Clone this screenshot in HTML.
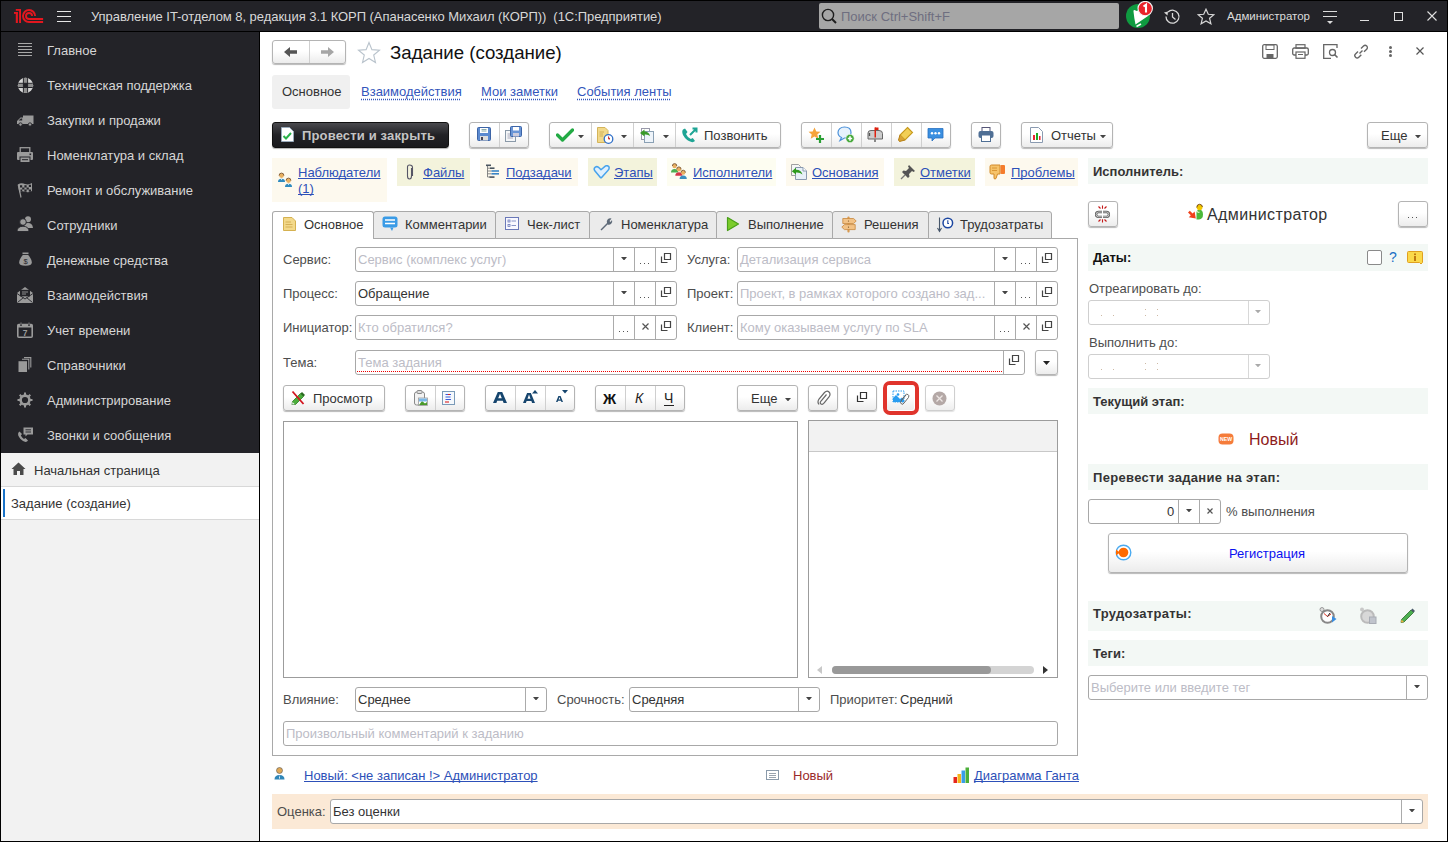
<!DOCTYPE html>
<html><head><meta charset="utf-8"><style>
html,body{margin:0;padding:0}
body{width:1448px;height:842px;position:relative;overflow:hidden;background:#000;font-family:"Liberation Sans", sans-serif}
.a{position:absolute}
.t{position:absolute;white-space:nowrap;font-family:"Liberation Sans", sans-serif}
.btn{position:absolute;border:1px solid #b4b4b4;border-radius:3px;background:linear-gradient(#ffffff 0%,#ffffff 45%,#ececec 100%);box-shadow:0 1px 1px rgba(0,0,0,0.28)}
.fld{position:absolute;border:1px solid #a8a8a8;border-radius:3px;background:#fff}
.lnk{text-decoration:underline;text-underline-offset:1px;text-decoration-skip-ink:none}
.dl{text-decoration:underline dotted;text-underline-offset:3px;text-decoration-skip-ink:none}
</style></head><body>
<div class="a" style="left:1px;top:1px;width:1446px;height:30px;background:#232328"></div>
<div class="a" style="left:1px;top:32px;width:258px;height:421px;background:#232328"></div>
<div class="a" style="left:1px;top:453px;width:258px;height:388px;background:#f2f2f2"></div>
<div class="a" style="left:260px;top:32px;width:1187px;height:809px;background:#fff"></div>
<svg class="a" style="left:0px;top:0px" width="50" height="30" viewBox="0 0 50 30"><g fill="#e3171f"><rect x="15.8" y="9" width="5.2" height="1.8"/><rect x="19.1" y="9" width="1.9" height="14"/><rect x="15.8" y="12" width="2.1" height="11"/><rect x="14" y="12" width="3.9" height="1.9"/></g><g fill="none" stroke="#e3171f" stroke-width="1.9"><path d="M35.1 16A6.05 6.05 0 1 0 29 22.05H43.1"/><path d="M32.1 16A3.05 3.05 0 1 0 29 19.05H43.1"/></g></svg>
<div class="a" style="left:57px;top:11px;width:14px;height:1px;background:#e6e6e6;height:1.2px"></div>
<div class="a" style="left:57px;top:16px;width:14px;height:1px;background:#e6e6e6;height:1.2px"></div>
<div class="a" style="left:57px;top:21px;width:14px;height:1px;background:#e6e6e6;height:1.2px"></div>
<div class="t " style="left:91px;top:9px;font-size:13px;line-height:15px;color:#d8d8d8;letter-spacing:-0.05px">Управление IT-отделом 8, редакция 3.1 КОРП (Апанасенко Михаил (КОРП))&nbsp; (1С:Предприятие)</div>
<div class="a" style="left:819px;top:3px;width:300px;height:26px;background:#a6a6a6;border-radius:2px"></div>
<svg class="a" style="left:821px;top:8px" width="17" height="16" viewBox="0 0 17 16"><circle cx="7" cy="7" r="5.6" fill="none" stroke="#1e1e1e" stroke-width="1.4"/><path d="M11 11L15 15" stroke="#1e1e1e" stroke-width="2"/></svg>
<div class="t " style="left:841px;top:9px;font-size:13px;line-height:15px;color:#6e6e80;">Поиск Ctrl+Shift+F</div>
<svg class="a" style="left:1124px;top:1px" width="32" height="29" viewBox="0 0 32 29"><circle cx="14" cy="15" r="12" fill="#0f9a40"/><path d="M9.5 10.5Q9 9 10.5 9Q11.5 9 12 10L20 8L24 15L11.5 23.5Q10 16 9.5 10.5Z" fill="#fff"/><path d="M12.5 25.5L17 23" stroke="#fff" stroke-width="1.6"/><circle cx="21.2" cy="7.6" r="7.2" fill="#e8232b" stroke="#f4f4f4" stroke-width="1.1"/><path d="M19.5 5.5L22 3.8V11.5" fill="none" stroke="#fff" stroke-width="2.1"/></svg>
<svg class="a" style="left:1163px;top:8px" width="18" height="17" viewBox="0 0 18 17"><path d="M3 8.5A6.5 6.5 0 1 0 5 4" fill="none" stroke="#d8d8d8" stroke-width="1.3"/><path d="M1 4.5L5 3.5L4.5 7.5Z" fill="#d8d8d8"/><path d="M9.5 5V9L12.5 11.5" fill="none" stroke="#d8d8d8" stroke-width="1.3"/></svg>
<svg class="a" style="left:1197px;top:8px" width="18" height="17" viewBox="0 0 18 17"><path d="M9 1.2L11.3 6.3L16.8 6.7L12.6 10.3L13.9 15.8L9 12.9L4.1 15.8L5.4 10.3L1.2 6.7L6.7 6.3Z" fill="none" stroke="#d8d8d8" stroke-width="1.2"/></svg>
<div class="t " style="left:1227px;top:10px;font-size:11.5px;line-height:12px;color:#dcdcdc;">Администратор</div>
<svg class="a" style="left:1322px;top:10px" width="16" height="15" viewBox="0 0 16 15"><path d="M1 1.5H15M1 6.5H15" stroke="#dcdcdc" stroke-width="1.1"/><path d="M5 11H11L8 14Z" fill="#dcdcdc"/></svg>
<div class="a" style="left:1360px;top:20px;width:9px;height:1.2px;background:#e0e0e0"></div>
<div class="a" style="left:1394px;top:12px;width:6.6px;height:6.6px;border:1.2px solid #e0e0e0"></div>
<svg class="a" style="left:1427px;top:11px" width="10" height="10" viewBox="0 0 10 10"><path d="M0.5 0.5L9.5 9.5M9.5 0.5L0.5 9.5" stroke="#e0e0e0" stroke-width="1.1"/></svg>
<div class="t " style="left:47px;top:43px;font-size:13px;line-height:15px;color:#d6d6d6;">Главное</div>
<div class="a" style="left:18px;top:43px;width:14px;height:1px;background:#a8a8a8"></div>
<div class="a" style="left:18px;top:46px;width:14px;height:1px;background:#a8a8a8"></div>
<div class="a" style="left:18px;top:49px;width:14px;height:1px;background:#a8a8a8"></div>
<div class="a" style="left:18px;top:52px;width:14px;height:1px;background:#a8a8a8"></div>
<div class="a" style="left:18px;top:55px;width:14px;height:1px;background:#a8a8a8"></div>
<div class="t " style="left:47px;top:78px;font-size:13px;line-height:15px;color:#d6d6d6;">Техническая поддержка</div>
<svg class="a" style="left:17px;top:77px" width="17" height="17" viewBox="0 0 17 17"><defs><clipPath id="lb"><circle cx="8.5" cy="8.4" r="7.7"/></clipPath></defs><g clip-path="url(#lb)"><rect width="17" height="17" fill="#d6d6d6"/><path d="M6.9 0H10.1V17H6.9ZM0 6.8H17V10H0Z" fill="#8e8e8e"/><path d="M6.4 0V17M10.6 0V17M0 6.3H17M0 10.5H17" stroke="#232328" stroke-width="1"/><rect x="6.4" y="6.3" width="4.2" height="4.2" fill="#232328"/></g></svg>
<div class="t " style="left:47px;top:113px;font-size:13px;line-height:15px;color:#d6d6d6;">Закупки и продажи</div>
<svg class="a" style="left:17px;top:115px" width="17" height="12" viewBox="0 0 17 12"><path d="M0 9V6L3.5 2.5H6V0.5H16.5V9Z" fill="#9a9a9a"/><path d="M1.5 5.5L3.8 3.5H5.2V5.5Z" fill="#232328"/><circle cx="3.5" cy="9.5" r="1.7" fill="#9a9a9a" stroke="#232328" stroke-width="0.9"/><circle cx="13" cy="9.5" r="1.7" fill="#9a9a9a" stroke="#232328" stroke-width="0.9"/></svg>
<div class="t " style="left:47px;top:148px;font-size:13px;line-height:15px;color:#d6d6d6;">Номенклатура и склад</div>
<svg class="a" style="left:17px;top:147px" width="16" height="16" viewBox="0 0 16 16"><rect x="3.2" y="0.7" width="9.6" height="5" fill="none" stroke="#9a9a9a" stroke-width="1.3"/><rect x="0" y="5" width="16" height="8" rx="1" fill="#9a9a9a"/><rect x="12.5" y="6.5" width="1.6" height="1.6" fill="#232328"/><rect x="3" y="10" width="10" height="5.5" fill="#9a9a9a" stroke="#232328" stroke-width="1"/><path d="M5 12.7H11" stroke="#232328" stroke-width="1"/></svg>
<div class="t " style="left:47px;top:183px;font-size:13px;line-height:15px;color:#d6d6d6;">Ремонт и обслуживание</div>
<svg class="a" style="left:17px;top:182px" width="16" height="16" viewBox="0 0 16 16"><path d="M1.2 2.5L4 15.5" stroke="#9a9a9a" stroke-width="1.2"/><path d="M1 2.5Q4 0.5 8 2Q11.5 3.2 15 1V9Q11.5 11 8 9.8Q4.5 8.5 2.3 10.5Z" fill="#9a9a9a"/><path d="M3 3.2h2.2v2.2h-2.2zM7.4 3.2h2.2v2.2h-2.2zM11.8 2.8h2.2v2.2h-2.2zM5.2 5.4h2.2v2.2h-2.2zM9.6 5.4h2.2v2.2h-2.2zM3.5 7.6h1.7v2.0h-1.7zM7.4 7.6h2.2v2.2h-2.2zM11.8 7.6h2.2v2.2h-2.2z" fill="#232328"/></svg>
<div class="t " style="left:47px;top:218px;font-size:13px;line-height:15px;color:#d6d6d6;">Сотрудники</div>
<svg class="a" style="left:17px;top:216px" width="17" height="16" viewBox="0 0 17 16"><circle cx="11" cy="3.2" r="3" fill="#9a9a9a"/><path d="M7 12Q7 7 11 7Q15.5 7 16 12Z" fill="#9a9a9a"/><circle cx="6" cy="6" r="3.3" fill="#9a9a9a" stroke="#232328" stroke-width="0.9"/><path d="M0 15.5Q0 10.5 6 10.2Q12 10.5 12 15.5Z" fill="#9a9a9a" stroke="#232328" stroke-width="0.9"/></svg>
<div class="t " style="left:47px;top:253px;font-size:13px;line-height:15px;color:#d6d6d6;">Денежные средства</div>
<svg class="a" style="left:19px;top:252px" width="13" height="15" viewBox="0 0 13 15"><rect x="3.5" y="0.5" width="6" height="1.6" fill="#9a9a9a"/><path d="M3.8 3H9.2Q12.8 7 12.8 10.5Q12.8 13.8 6.5 13.8Q0.2 13.8 0.2 10.5Q0.2 7 3.8 3Z" fill="#9a9a9a"/><text x="6.5" y="11.8" font-size="7.5" fill="#232328" text-anchor="middle" font-family="Liberation Sans">$</text></svg>
<div class="t " style="left:47px;top:288px;font-size:13px;line-height:15px;color:#d6d6d6;">Взаимодействия</div>
<svg class="a" style="left:17px;top:287px" width="16" height="16" viewBox="0 0 16 16"><path d="M0 6L8 0L16 6V16H0Z" fill="#9a9a9a"/><rect x="3" y="2.8" width="10" height="6.5" fill="#232328"/><path d="M5 5H11M5 7H9" stroke="#9a9a9a" stroke-width="0.9"/><path d="M0.5 15.5L6.5 10.5M15.5 15.5L9.5 10.5M0 6.5L8 12L16 6.5" fill="none" stroke="#232328" stroke-width="0.9"/></svg>
<div class="t " style="left:47px;top:323px;font-size:13px;line-height:15px;color:#d6d6d6;">Учет времени</div>
<svg class="a" style="left:17px;top:322px" width="16" height="16" viewBox="0 0 16 16"><rect x="0.8" y="2.5" width="14.4" height="12.7" rx="1" fill="none" stroke="#9a9a9a" stroke-width="1.6"/><rect x="0.8" y="2.5" width="14.4" height="3" fill="#9a9a9a"/><path d="M4 0V4M12 0V4" stroke="#232328" stroke-width="1.8"/><path d="M4 0.5V3.5M12 0.5V3.5" stroke="#9a9a9a" stroke-width="0.9"/><text x="8" y="14" font-size="8.5" font-weight="bold" fill="#9a9a9a" text-anchor="middle" font-family="Liberation Sans">7</text></svg>
<div class="t " style="left:47px;top:358px;font-size:13px;line-height:15px;color:#d6d6d6;">Справочники</div>
<svg class="a" style="left:18px;top:357px" width="14" height="16" viewBox="0 0 14 16"><path d="M6 0.6H12.8V10.5" fill="none" stroke="#9a9a9a" stroke-width="1.1"/><path d="M4 2.3H10.8V12.5" fill="none" stroke="#9a9a9a" stroke-width="1.1"/><rect x="0.5" y="4.2" width="8.5" height="10.8" fill="#9a9a9a"/></svg>
<div class="t " style="left:47px;top:393px;font-size:13px;line-height:15px;color:#d6d6d6;">Администрирование</div>
<svg class="a" style="left:17px;top:392px" width="16" height="16" viewBox="0 0 16 16"><circle cx="8" cy="8" r="4.4" fill="none" stroke="#9a9a9a" stroke-width="2.6"/><path d="M8 0.5V3.5M8 12.5V15.5M0.5 8H3.5M12.5 8H15.5M2.7 2.7L4.8 4.8M11.2 11.2L13.3 13.3M13.3 2.7L11.2 4.8M4.8 11.2L2.7 13.3" stroke="#9a9a9a" stroke-width="2"/></svg>
<div class="t " style="left:47px;top:428px;font-size:13px;line-height:15px;color:#d6d6d6;">Звонки и сообщения</div>
<svg class="a" style="left:17px;top:427px" width="17" height="16" viewBox="0 0 17 16"><path d="M1.5 5.5Q0 8 3.5 12Q7.5 16 10 14.5L11 13.5L8.5 11L7 12Q5 10.5 3.8 8.5L5 7L2.5 4.5Z" fill="#9a9a9a"/><path d="M6.5 0.5H16V7.5H10.5L8.5 9.5V7.5H6.5Z" fill="#9a9a9a"/><path d="M8.5 2.8H14M8.5 5H14" stroke="#232328" stroke-width="0.9"/></svg>
<svg class="a" style="left:11px;top:462px" width="15" height="13" viewBox="0 0 15 13"><path d="M7.5 0.5L0.5 7H2.5V13H6V9H9V13H12.5V7H14.5Z" fill="#4a4a4a"/></svg>
<div class="t " style="left:34px;top:463px;font-size:13px;line-height:15px;color:#333;">Начальная страница</div>
<div class="a" style="left:1px;top:486px;width:258px;height:1px;background:#d8d8d8"></div>
<div class="a" style="left:1px;top:487px;width:258px;height:32px;background:#fff"></div>
<div class="a" style="left:3px;top:489px;width:2px;height:28px;background:#1a73c8"></div>
<div class="t " style="left:11px;top:496px;font-size:13px;line-height:15px;color:#333;">Задание (создание)</div>
<div class="a" style="left:1px;top:519px;width:258px;height:1px;background:#d8d8d8"></div>
<div class="btn" style="left:272px;top:40px;width:72px;height:22px;"></div>
<div class="a" style="left:309px;top:41px;width:1px;height:22px;background:#d0d0d0"></div>
<svg class="a" style="left:283px;top:46px" width="16" height="12" viewBox="0 0 16 12"><path d="M1 6L7 1V4.2H14V7.8H7V11Z" fill="#555"/></svg>
<svg class="a" style="left:319px;top:46px" width="16" height="12" viewBox="0 0 16 12"><path d="M15 6L9 1V4.2H2V7.8H9V11Z" fill="#a6a6a6"/></svg>
<svg class="a" style="left:357px;top:41px" width="24" height="23" viewBox="0 0 24 23"><path d="M12 1.5L14.9 8.6L22.5 9.1L16.7 14L18.5 21.5L12 17.5L5.5 21.5L7.3 14L1.5 9.1L9.1 8.6Z" fill="none" stroke="#b9c3cc" stroke-width="1.1"/></svg>
<div class="t " style="left:390px;top:42px;font-size:18.67px;line-height:21px;color:#111;">Задание (создание)</div>
<svg class="a" style="left:1262px;top:44px" width="16" height="15" viewBox="0 0 16 15"><rect x="0.7" y="0.7" width="14.6" height="13.6" rx="1.5" fill="none" stroke="#666" stroke-width="1.3"/><rect x="4" y="1" width="8" height="4.5" fill="none" stroke="#666" stroke-width="1"/><rect x="4.5" y="10" width="7" height="4" fill="#666"/></svg>
<svg class="a" style="left:1292px;top:44px" width="17" height="15" viewBox="0 0 17 15"><rect x="4" y="0.7" width="9" height="3.5" fill="none" stroke="#666" stroke-width="1.2"/><rect x="0.7" y="4" width="15.6" height="7" rx="1.5" fill="none" stroke="#666" stroke-width="1.3"/><rect x="4" y="8" width="9" height="6.3" fill="#fff" stroke="#666" stroke-width="1.2"/><path d="M6 10.5H11" stroke="#666"/></svg>
<svg class="a" style="left:1323px;top:44px" width="16" height="15" viewBox="0 0 16 15"><path d="M14 4V0.7H0.7V14.3H8" fill="none" stroke="#666" stroke-width="1.3"/><circle cx="9.5" cy="8.5" r="3" fill="none" stroke="#666" stroke-width="1.3"/><path d="M11.5 10.5L14.5 13.5" stroke="#666" stroke-width="1.6"/></svg>
<svg class="a" style="left:1353px;top:44px" width="16" height="15" viewBox="0 0 16 15"><path d="M6.5 9.5L9.5 6.5M5 7.5L2.5 10A2.2 2.2 0 0 0 5.8 13.2L8.3 10.7M8 4.5L10.5 2A2.2 2.2 0 0 1 13.7 5.2L11 7.8" fill="none" stroke="#666" stroke-width="1.4"/></svg>
<div class="a" style="left:1389px;top:46px;width:3px;height:3px;background:#666;border-radius:50%"></div>
<div class="a" style="left:1389px;top:50px;width:3px;height:3px;background:#666;border-radius:50%"></div>
<div class="a" style="left:1389px;top:54px;width:3px;height:3px;background:#666;border-radius:50%"></div>
<svg class="a" style="left:1416.0px;top:47.0px" width="8" height="8" viewBox="0 0 8 8"><path d="M0.5 0.5L7.5 7.5M7.5 0.5L0.5 7.5" stroke="#555" stroke-width="1.2"/></svg>
<div class="a" style="left:272px;top:75px;width:78px;height:34px;background:#f0f0f0;border-radius:3px"></div>
<div class="t " style="left:282px;top:84px;font-size:13px;line-height:15px;color:#333;">Основное</div>
<div class="t dl" style="left:361px;top:84px;font-size:13px;line-height:15px;color:#3355bb;">Взаимодействия</div>
<div class="t dl" style="left:481px;top:84px;font-size:13px;line-height:15px;color:#3355bb;">Мои заметки</div>
<div class="t dl" style="left:577px;top:84px;font-size:13px;line-height:15px;color:#3355bb;">События ленты</div>
<div class="a" style="left:272px;top:122px;width:175px;height:24px;border:1px solid #111;border-radius:3px;background:linear-gradient(#4a4a4e,#222226 50%,#1a1a1d);box-shadow:0 1px 1px rgba(0,0,0,0.3)"></div>
<svg class="a" style="left:281px;top:127px" width="13" height="15" viewBox="0 0 13 15"><path d="M0.5 0.5H8.5L12.5 4.5V14.5H0.5Z" fill="#fff" stroke="#9ab" stroke-width="1"/><path d="M2.5 9L5 11.5L10 6" fill="none" stroke="#2ab24a" stroke-width="2"/></svg>
<div class="t " style="left:302px;top:128px;font-size:13px;line-height:15px;color:#c4c4c4;font-weight:bold;letter-spacing:0.15px">Провести и закрыть</div>
<div class="btn" style="left:469px;top:122px;width:58px;height:24px;"></div>
<div class="a" style="left:499px;top:123px;width:1px;height:24px;background:#cfcfcf"></div>
<svg class="a" style="left:477px;top:127px" width="14" height="14" viewBox="0 0 14 14"><rect x="0.5" y="0.5" width="13" height="13" rx="1" fill="#5b8ad0" stroke="#3c64a6"/><rect x="3" y="1" width="8" height="5" fill="#fff"/><path d="M4.5 2.5H9.5M4.5 4H9.5" stroke="#8aa"/><rect x="3" y="9" width="8" height="4.5" fill="#ddd"/><rect x="4" y="10" width="2" height="3" fill="#445"/></svg>
<svg class="a" style="left:505px;top:126px" width="17" height="16" viewBox="0 0 17 16"><rect x="0.5" y="4.5" width="10" height="11" fill="#f4f6f8" stroke="#8a99a8"/><path d="M2.5 8H8M2.5 10H8M2.5 12H8" stroke="#aab"/><rect x="5.5" y="0.5" width="11" height="10" rx="1" fill="#6a95d6" stroke="#3c64a6"/><rect x="8" y="1" width="6" height="3.5" fill="#fff"/><rect x="8" y="7" width="6" height="3.5" fill="#ccd"/></svg>
<div class="btn" style="left:549px;top:122px;width:230px;height:24px;"></div>
<div class="a" style="left:591px;top:123px;width:1px;height:24px;background:#cfcfcf"></div>
<div class="a" style="left:633px;top:123px;width:1px;height:24px;background:#cfcfcf"></div>
<div class="a" style="left:675px;top:123px;width:1px;height:24px;background:#cfcfcf"></div>
<svg class="a" style="left:556px;top:128px" width="18" height="14" viewBox="0 0 18 14"><path d="M1.5 7L6.5 12L16.5 2" fill="none" stroke="#22aa44" stroke-width="3.3" stroke-linejoin="round" stroke-linecap="round"/></svg>
<svg class="a" style="left:578.0px;top:134.6px" width="6" height="3.4" viewBox="0 0 6 3.4"><path d="M0 0H6L3.0 3.4Z" fill="#444"/></svg>
<svg class="a" style="left:597px;top:127px" width="17" height="17" viewBox="0 0 17 17"><path d="M0.5 0.5H8L11 3.5V15.5H0.5Z" fill="#f2d98a" stroke="#d4b45a"/><path d="M2.5 5H7M2.5 7H6M2.5 9H6" stroke="#c9a64a" stroke-width="0.8"/><circle cx="11.5" cy="12" r="4.3" fill="#fff" stroke="#2f6fc8" stroke-width="1.3"/><path d="M11.5 9.5V12H13" stroke="#d33" stroke-width="1"/></svg>
<svg class="a" style="left:620.5px;top:134.6px" width="6" height="3.4" viewBox="0 0 6 3.4"><path d="M0 0H6L3.0 3.4Z" fill="#444"/></svg>
<svg class="a" style="left:639px;top:127px" width="16" height="16" viewBox="0 0 16 16"><rect x="2.5" y="1.5" width="8" height="11" fill="#fff" stroke="#99a"/><rect x="5.5" y="4.5" width="9" height="11" fill="#eef4fa" stroke="#8aa0b4"/><path d="M1 6L5.5 2.5V4.5Q10 4.5 11 9Q9 7 5.5 7.5V9.5Z" fill="#3a9a2a"/></svg>
<svg class="a" style="left:662.5px;top:134.6px" width="6" height="3.4" viewBox="0 0 6 3.4"><path d="M0 0H6L3.0 3.4Z" fill="#444"/></svg>
<svg class="a" style="left:681px;top:127px" width="17" height="16" viewBox="0 0 17 16"><path d="M2 2.5Q0.5 4 2 8Q5 13.5 10.5 15Q12.5 15.5 14 14L11.8 11L9.8 12Q6.5 10.5 5 7L6.5 5L4 1.5Z" fill="#1fa595"/><path d="M9 8L15 2M11.5 1.5H15.5V5.5" fill="none" stroke="#1fa595" stroke-width="2"/></svg>
<div class="t " style="left:704px;top:128px;font-size:13px;line-height:15px;color:#333;">Позвонить</div>
<div class="btn" style="left:801px;top:122px;width:148px;height:24px;"></div>
<div class="a" style="left:831px;top:123px;width:1px;height:24px;background:#cfcfcf"></div>
<div class="a" style="left:861px;top:123px;width:1px;height:24px;background:#cfcfcf"></div>
<div class="a" style="left:891px;top:123px;width:1px;height:24px;background:#cfcfcf"></div>
<div class="a" style="left:921px;top:123px;width:1px;height:24px;background:#cfcfcf"></div>
<svg class="a" style="left:808px;top:127px" width="17" height="16" viewBox="0 0 17 16"><path d="M6.5 0.5L8.3 4.5L12.5 4.8L9.3 7.6L10.3 11.8L6.5 9.5L2.7 11.8L3.7 7.6L0.5 4.8L4.7 4.5Z" fill="#f5a43a"/><path d="M12 8V16M8 12H16" stroke="#2aa034" stroke-width="2.2"/></svg>
<svg class="a" style="left:837px;top:126px" width="18" height="17" viewBox="0 0 18 17"><path d="M7.5 1C3.5 1 1 3.5 1 6.5Q1 10 4.5 11.5L3 14.5L7.5 12Q14 12 14 6.5Q14 1 7.5 1Z" fill="#e7f2fc" stroke="#4a90d9" stroke-width="1.2"/><circle cx="13" cy="12.5" r="4.2" fill="#46a83a" stroke="#fff" stroke-width="0.6"/><path d="M13 10.3V14.7M10.8 12.5H15.2" stroke="#fff" stroke-width="1.6"/></svg>
<svg class="a" style="left:867px;top:127px" width="17" height="16" viewBox="0 0 17 16"><path d="M1 6Q1 3.5 4 3.5H12Q15.5 3.5 15.5 6.5V12H1Z" fill="#ccc" stroke="#666" stroke-width="1"/><path d="M2.5 6V9" stroke="#555" stroke-width="1.3"/><rect x="7.5" y="0.5" width="1.5" height="10" fill="#d21"/><rect x="8" y="0.5" width="3.5" height="2.5" fill="#d21"/><rect x="7" y="12" width="2" height="3" fill="#888"/></svg>
<svg class="a" style="left:897px;top:126px" width="17" height="17" viewBox="0 0 17 17"><path d="M10.5 1.5L15.5 6.5L8 14L3 9Z" fill="#f2cf56" stroke="#c79a1e" stroke-width="1.1"/><path d="M3 9L1.5 14L2.5 15.5L8 14" fill="#d9a336" stroke="#b67e12" stroke-width="1"/></svg>
<svg class="a" style="left:927px;top:127px" width="17" height="15" viewBox="0 0 17 15"><path d="M1 1.5H16V11H8L5 14V11H1Z" fill="#3a8fe0" stroke="#2770c0" stroke-width="0.8"/><circle cx="5" cy="6.2" r="1.2" fill="#fff"/><circle cx="8.5" cy="6.2" r="1.2" fill="#fff"/><circle cx="12" cy="6.2" r="1.2" fill="#fff"/></svg>
<div class="btn" style="left:971px;top:122px;width:28px;height:24px;"></div>
<svg class="a" style="left:978px;top:127px" width="16" height="15" viewBox="0 0 16 15"><rect x="4" y="0.5" width="8" height="4" fill="#fff" stroke="#557"/><rect x="0.5" y="4" width="15" height="7" rx="2" fill="#4f6f95"/><rect x="3.5" y="8" width="9" height="6.5" fill="#fff" stroke="#4f6f95"/></svg>
<div class="btn" style="left:1021px;top:122px;width:90px;height:24px;"></div>
<svg class="a" style="left:1030px;top:127px" width="13" height="16" viewBox="0 0 13 16"><path d="M0.5 0.5H8.5L12.5 4.5V15.5H0.5Z" fill="#fff" stroke="#8a9ab0"/><rect x="3" y="8" width="2" height="5" fill="#e23"/><rect x="6" y="6" width="2" height="7" fill="#2a2"/><rect x="9" y="9" width="1.5" height="4" fill="#e23"/></svg>
<div class="t " style="left:1051px;top:128px;font-size:13px;line-height:15px;color:#333;">Отчеты</div>
<svg class="a" style="left:1100.0px;top:134.6px" width="6" height="3.4" viewBox="0 0 6 3.4"><path d="M0 0H6L3.0 3.4Z" fill="#444"/></svg>
<div class="btn" style="left:1367px;top:122px;width:59px;height:24px;"></div>
<div class="t " style="left:1381px;top:128px;font-size:13px;line-height:15px;color:#333;">Еще</div>
<svg class="a" style="left:1415.0px;top:134.7px" width="6" height="3.4" viewBox="0 0 6 3.4"><path d="M0 0H6L3.0 3.4Z" fill="#444"/></svg>
<div class="a" style="left:272px;top:158px;width:115px;height:44px;background:#fdf9ee"></div>
<svg class="a" style="left:277px;top:172px" width="16" height="16" viewBox="0 0 16 16"><g><path d="M1 10Q1 6.8 4.5 6.8Q8 6.8 8 10Z" fill="#2e8bc0"/><path d="M3.8 6.9L4.5 8.3L5.2 6.9Z" fill="#fff"/><circle cx="4.5" cy="3.6" r="2.4" fill="#e8b060"/><path d="M2.1 3.6Q2.1 1.1 4.5 1.1Q6.9 1.1 6.9 3.6" fill="none" stroke="#7a5530" stroke-width="0.9"/></g><g transform="translate(7,5)"><path d="M1 10Q1 6.8 4.5 6.8Q8 6.8 8 10Z" fill="#2e8bc0"/><path d="M3.8 6.9L4.5 8.3L5.2 6.9Z" fill="#fff"/><circle cx="4.5" cy="3.6" r="2.4" fill="#e8b060"/><path d="M2.1 3.6Q2.1 1.1 4.5 1.1Q6.9 1.1 6.9 3.6" fill="none" stroke="#7a5530" stroke-width="0.9"/></g></svg>
<div class="t lnk" style="left:298px;top:165px;font-size:13px;line-height:15px;color:#2d50b8;">Наблюдатели</div>
<div class="t lnk" style="left:298px;top:181px;font-size:13px;line-height:15px;color:#2d50b8;">(1)</div>
<div class="a" style="left:397px;top:158px;width:73px;height:28px;background:#f3f3dc"></div>
<svg class="a" style="left:405px;top:164px" width="9" height="16" viewBox="0 0 9 16"><path d="M6.5 4V12Q6.5 15 4.5 15Q2.5 15 2.5 12V3Q2.5 1 4.5 1Q7.5 1 7.5 3.5V12" fill="none" stroke="#556" stroke-width="1.1"/></svg>
<div class="t lnk" style="left:423px;top:165px;font-size:13px;line-height:15px;color:#2d50b8;">Файлы</div>
<div class="a" style="left:480px;top:158px;width:98px;height:28px;background:#fdf9ee"></div>
<svg class="a" style="left:485px;top:163px" width="15" height="16" viewBox="0 0 15 16"><path d="M2.5 3V14M2.5 5.2H5M2.5 8H6.5M2.5 10.8H6.5M2.5 14H5" fill="none" stroke="#7a7a7a" stroke-width="0.9"/><rect x="1" y="1.5" width="5" height="1.6" fill="#4a5560"/><rect x="5" y="4.4" width="4.5" height="1.6" fill="#4a5560"/><rect x="6.5" y="7.2" width="7.5" height="1.6" fill="#3a85c6"/><rect x="6.5" y="10" width="7.5" height="1.6" fill="#3a85c6"/><rect x="4.5" y="13.3" width="5" height="1.6" fill="#4a5560"/></svg>
<div class="t lnk" style="left:506px;top:165px;font-size:13px;line-height:15px;color:#2d50b8;">Подзадачи</div>
<div class="a" style="left:588px;top:158px;width:69px;height:28px;background:#f3f3dc"></div>
<svg class="a" style="left:593px;top:165px" width="17" height="14" viewBox="0 0 17 14"><path d="M1.8 5.8Q0.3 3.6 2.3 2.1Q4.3 0.8 6.3 2.9L8 4.8L12.3 1.1Q14.3 -0.1 15.8 1.6Q16.8 3.6 14.9 5.6L8.6 12.4Q8 13 7.4 12.4Z" fill="#dff0fd" stroke="#47a3ec" stroke-width="1.5" stroke-linejoin="round"/></svg>
<div class="t lnk" style="left:614px;top:165px;font-size:13px;line-height:15px;color:#2d50b8;">Этапы</div>
<div class="a" style="left:667px;top:158px;width:109px;height:28px;background:#fdfdf1"></div>
<svg class="a" style="left:671px;top:163px" width="17" height="18" viewBox="0 0 17 18"><path d="M0 9.5Q0 6 3.6 6Q7.2 6 7.2 9.5Z" fill="#4caf50"/><circle cx="3.6" cy="3" r="2.2" fill="#e8b060"/><path d="M1.4 3Q1.4 0.6 3.6 0.6Q5.8 0.6 5.8 3" fill="none" stroke="#7a5530" stroke-width="0.9"/><path d="M4.3 12.8Q4.3 9.3 7.9 9.3Q11.5 9.3 11.5 12.8Z" fill="#d6334a"/><circle cx="7.9" cy="6.3" r="2.2" fill="#e8b060"/><path d="M5.699999999999999 6.3Q5.699999999999999 3.9 7.9 3.9Q10.1 3.9 10.1 6.3" fill="none" stroke="#7a5530" stroke-width="0.9"/><path d="M8.6 16.1Q8.6 12.6 12.2 12.6Q15.8 12.6 15.8 16.1Z" fill="#3b8fc0"/><circle cx="12.2" cy="9.6" r="2.2" fill="#e8b060"/><path d="M10.0 9.6Q10.0 7.199999999999999 12.2 7.199999999999999Q14.399999999999999 7.199999999999999 14.399999999999999 9.6" fill="none" stroke="#7a5530" stroke-width="0.9"/></svg>
<div class="t lnk" style="left:693px;top:165px;font-size:13px;line-height:15px;color:#2d50b8;">Исполнители</div>
<div class="a" style="left:786px;top:158px;width:98px;height:28px;background:#fdf9ee"></div>
<svg class="a" style="left:791px;top:164px" width="16" height="16" viewBox="0 0 16 16"><path d="M0.5 0.5H7.5L9.5 2.5V11.5H0.5Z" fill="#f6f6f6" stroke="#a0a0a0"/><path d="M4.5 3.5H12L15.5 7V15.5H4.5Z" fill="#e8f0f8" stroke="#8a9ab0"/><path d="M12 3.5V7H15.5" fill="#fff" stroke="#8a9ab0"/><path d="M0.8 7.2L5 3.8V5.8Q10 5.6 11.5 10.5Q9 8.3 5 8.6V10.6Z" fill="#2e9a1e"/></svg>
<div class="t lnk" style="left:812px;top:165px;font-size:13px;line-height:15px;color:#2d50b8;">Основания</div>
<div class="a" style="left:894px;top:158px;width:81px;height:28px;background:#f3f3dc"></div>
<svg class="a" style="left:900px;top:164px" width="16" height="16" viewBox="0 0 16 16"><path d="M9 1L15 7L13.5 8L12 7L9 10L9.5 12.5L8 14L2 8L3.5 6.5L6 7L9 4L8 2.5Z" fill="#555"/><path d="M5 11L1 15" stroke="#777" stroke-width="1.3"/></svg>
<div class="t lnk" style="left:920px;top:165px;font-size:13px;line-height:15px;color:#2d50b8;">Отметки</div>
<div class="a" style="left:985px;top:158px;width:93px;height:28px;background:#fdf9ee"></div>
<svg class="a" style="left:989px;top:164px" width="17" height="16" viewBox="0 0 17 16"><path d="M1 2.5Q1 1 2.5 1H11V10H8.5L7 14.5Q6 15.5 5 14.5L5 10H2.5Q1 10 1 8.5Z" fill="#f6c36a" stroke="#d28a2a" stroke-width="1"/><path d="M3 4H8M3 6.5H8" stroke="#d28a2a" stroke-width="0.8"/><rect x="11.5" y="1" width="4.5" height="9" rx="1" fill="#f57c2c"/></svg>
<div class="t lnk" style="left:1011px;top:165px;font-size:13px;line-height:15px;color:#2d50b8;">Проблемы</div>
<div class="a" style="left:272px;top:238px;width:804px;height:516px;border:1px solid #a9a9a9;border-top:1px solid #a9a9a9;background:#fff"></div>
<div class="a" style="left:272px;top:211px;width:100px;height:27px;border:1px solid #a9a9a9;border-bottom:none;border-radius:3px 3px 0 0;background:#fff"></div>
<div class="a" style="left:273px;top:238px;width:100px;height:1px;background:#fff"></div>
<div class="t " style="left:304px;top:217px;font-size:13px;line-height:15px;color:#333;">Основное</div>
<div class="a" style="left:373px;top:211px;width:121px;height:26px;border:1px solid #a9a9a9;border-radius:3px 3px 0 0;background:#ebebeb"></div>
<div class="t " style="left:405px;top:217px;font-size:13px;line-height:15px;color:#333;">Комментарии</div>
<div class="a" style="left:495px;top:211px;width:93px;height:26px;border:1px solid #a9a9a9;border-radius:3px 3px 0 0;background:#ebebeb"></div>
<div class="t " style="left:527px;top:217px;font-size:13px;line-height:15px;color:#333;">Чек-лист</div>
<div class="a" style="left:589px;top:211px;width:126px;height:26px;border:1px solid #a9a9a9;border-radius:3px 3px 0 0;background:#ebebeb"></div>
<div class="t " style="left:621px;top:217px;font-size:13px;line-height:15px;color:#333;">Номенклатура</div>
<div class="a" style="left:716px;top:211px;width:115px;height:26px;border:1px solid #a9a9a9;border-radius:3px 3px 0 0;background:#ebebeb"></div>
<div class="t " style="left:748px;top:217px;font-size:13px;line-height:15px;color:#333;">Выполнение</div>
<div class="a" style="left:832px;top:211px;width:95px;height:26px;border:1px solid #a9a9a9;border-radius:3px 3px 0 0;background:#ebebeb"></div>
<div class="t " style="left:864px;top:217px;font-size:13px;line-height:15px;color:#333;">Решения</div>
<div class="a" style="left:928px;top:211px;width:122px;height:26px;border:1px solid #a9a9a9;border-radius:3px 3px 0 0;background:#ebebeb"></div>
<div class="t " style="left:960px;top:217px;font-size:13px;line-height:15px;color:#333;">Трудозатраты</div>
<svg class="a" style="left:283px;top:217px" width="13" height="14" viewBox="0 0 13 14"><path d="M0.5 0.5H9L12.5 4V13.5H0.5Z" fill="#f3d98a" stroke="#d5b150"/><path d="M2.5 5H8M2.5 7.5H9.5M2.5 10H9.5" stroke="#cda64a" stroke-width="0.8"/></svg>
<svg class="a" style="left:382px;top:216px" width="16" height="16" viewBox="0 0 16 16"><rect x="0.5" y="0.5" width="15" height="11" rx="2.5" fill="#3a9be6"/><path d="M3 4H13M3 7.5H13" stroke="#fff" stroke-width="1.3"/><path d="M8 11.5L10 15L11.5 11.5Z" fill="#3a9be6"/></svg>
<svg class="a" style="left:505px;top:217px" width="14" height="13" viewBox="0 0 14 13"><rect x="0.5" y="0.5" width="13" height="12" fill="#f8f8ff" stroke="#6a78b8"/><rect x="3" y="3" width="2" height="2" fill="none" stroke="#6a78b8" stroke-width="0.8"/><rect x="3" y="7.5" width="2" height="2" fill="none" stroke="#6a78b8" stroke-width="0.8"/><path d="M6.5 4H11M6.5 8.5H11" stroke="#6a78b8" stroke-width="0.8"/></svg>
<svg class="a" style="left:599px;top:217px" width="14" height="14" viewBox="0 0 14 14"><path d="M1.5 12.5L8 6A3.5 3.5 0 0 1 12.5 1.5L10.5 4L11.5 5L13 3A3.5 3.5 0 0 1 8.5 7.5L2.5 13.5Z" fill="#5e6a78"/></svg>
<svg class="a" style="left:726px;top:216px" width="14" height="16" viewBox="0 0 14 16"><path d="M1.5 1.5L12.5 8L1.5 14.5Z" fill="#7ccc2c" stroke="#4aa01a" stroke-width="1.2" stroke-linejoin="round"/></svg>
<svg class="a" style="left:841px;top:216px" width="16" height="17" viewBox="0 0 16 17"><rect x="6.4" y="0.5" width="2.2" height="16" rx="1" fill="#d89a50"/><path d="M1.8 2.5H12.6L15.2 5L12.6 7.5H1.8Z" fill="#f2c286" stroke="#c8883c" stroke-width="0.8"/><path d="M14.2 8.6H3.4L0.8 11.1L3.4 13.6H14.2Z" fill="#f2c286" stroke="#c8883c" stroke-width="0.8"/><circle cx="7.5" cy="5" r="0.6" fill="#6a4a20"/><circle cx="7.5" cy="11.1" r="0.6" fill="#6a4a20"/></svg>
<svg class="a" style="left:937px;top:217px" width="17" height="16" viewBox="0 0 17 16"><path d="M2.5 0.5V13.5M0.5 11L2.5 14.5L4.5 11" fill="none" stroke="#46566a" stroke-width="1.1"/><circle cx="10.8" cy="6" r="4.8" fill="#fff" stroke="#1c46a0" stroke-width="1.5"/><path d="M10.8 3.3V6.5H12" fill="none" stroke="#1c46a0" stroke-width="1.1"/></svg>
<div class="t " style="left:283px;top:252px;font-size:13px;line-height:15px;color:#4d4d4d;">Сервис:</div>
<div class="fld" style="left:355px;top:247px;width:320px;height:23px;border-color:#a8a8a8;"></div>
<div class="a" style="left:613px;top:248px;width:1px;height:23px;background:#ababab"></div>
<svg class="a" style="left:620.5px;top:256.75px" width="6" height="3.5" viewBox="0 0 6 3.5"><path d="M0 0H6L3.0 3.5Z" fill="#444"/></svg>
<div class="a" style="left:634px;top:248px;width:1px;height:23px;background:#ababab"></div>
<div class="a" style="left:640px;top:263px;width:1.4px;height:1.4px;background:#555"></div>
<div class="a" style="left:644px;top:263px;width:1.4px;height:1.4px;background:#555"></div>
<div class="a" style="left:648px;top:263px;width:1.4px;height:1.4px;background:#555"></div>
<div class="a" style="left:655px;top:248px;width:1px;height:23px;background:#ababab"></div>
<svg class="a" style="left:660px;top:252px" width="12" height="12" viewBox="0 0 12 12"><path d="M4.5 1.5h6v6h-6z M1.5 4.5v6h6" fill="none" stroke="#444" stroke-width="1.2"/></svg>
<div class="t " style="left:358px;top:252px;font-size:13px;line-height:15px;color:#bcbcc6;">Сервис (комплекс услуг)</div>
<div class="t " style="left:283px;top:286px;font-size:13px;line-height:15px;color:#4d4d4d;">Процесс:</div>
<div class="fld" style="left:355px;top:281px;width:320px;height:23px;border-color:#a8a8a8;"></div>
<div class="a" style="left:613px;top:282px;width:1px;height:23px;background:#ababab"></div>
<svg class="a" style="left:620.5px;top:290.75px" width="6" height="3.5" viewBox="0 0 6 3.5"><path d="M0 0H6L3.0 3.5Z" fill="#444"/></svg>
<div class="a" style="left:634px;top:282px;width:1px;height:23px;background:#ababab"></div>
<div class="a" style="left:640px;top:297px;width:1.4px;height:1.4px;background:#555"></div>
<div class="a" style="left:644px;top:297px;width:1.4px;height:1.4px;background:#555"></div>
<div class="a" style="left:648px;top:297px;width:1.4px;height:1.4px;background:#555"></div>
<div class="a" style="left:655px;top:282px;width:1px;height:23px;background:#ababab"></div>
<svg class="a" style="left:660px;top:286px" width="12" height="12" viewBox="0 0 12 12"><path d="M4.5 1.5h6v6h-6z M1.5 4.5v6h6" fill="none" stroke="#444" stroke-width="1.2"/></svg>
<div class="t " style="left:358px;top:286px;font-size:13px;line-height:15px;color:#333;">Обращение</div>
<div class="t " style="left:283px;top:320px;font-size:13px;line-height:15px;color:#4d4d4d;">Инициатор:</div>
<div class="fld" style="left:355px;top:315px;width:320px;height:23px;border-color:#a8a8a8;"></div>
<div class="a" style="left:613px;top:316px;width:1px;height:23px;background:#ababab"></div>
<div class="a" style="left:619px;top:331px;width:1.4px;height:1.4px;background:#555"></div>
<div class="a" style="left:623px;top:331px;width:1.4px;height:1.4px;background:#555"></div>
<div class="a" style="left:627px;top:331px;width:1.4px;height:1.4px;background:#555"></div>
<div class="a" style="left:634px;top:316px;width:1px;height:23px;background:#ababab"></div>
<svg class="a" style="left:641.5px;top:322.5px" width="7" height="7" viewBox="0 0 7 7"><path d="M0.5 0.5L6.5 6.5M6.5 0.5L0.5 6.5" stroke="#555" stroke-width="1.2"/></svg>
<div class="a" style="left:655px;top:316px;width:1px;height:23px;background:#ababab"></div>
<svg class="a" style="left:660px;top:320px" width="12" height="12" viewBox="0 0 12 12"><path d="M4.5 1.5h6v6h-6z M1.5 4.5v6h6" fill="none" stroke="#444" stroke-width="1.2"/></svg>
<div class="t " style="left:358px;top:320px;font-size:13px;line-height:15px;color:#bcbcc6;">Кто обратился?</div>
<div class="t " style="left:687px;top:252px;font-size:13px;line-height:15px;color:#4d4d4d;">Услуга:</div>
<div class="fld" style="left:737px;top:247px;width:319px;height:23px;border-color:#a8a8a8;"></div>
<div class="a" style="left:994px;top:248px;width:1px;height:23px;background:#ababab"></div>
<svg class="a" style="left:1001.5px;top:256.75px" width="6" height="3.5" viewBox="0 0 6 3.5"><path d="M0 0H6L3.0 3.5Z" fill="#444"/></svg>
<div class="a" style="left:1015px;top:248px;width:1px;height:23px;background:#ababab"></div>
<div class="a" style="left:1021px;top:263px;width:1.4px;height:1.4px;background:#555"></div>
<div class="a" style="left:1025px;top:263px;width:1.4px;height:1.4px;background:#555"></div>
<div class="a" style="left:1029px;top:263px;width:1.4px;height:1.4px;background:#555"></div>
<div class="a" style="left:1036px;top:248px;width:1px;height:23px;background:#ababab"></div>
<svg class="a" style="left:1041px;top:252px" width="12" height="12" viewBox="0 0 12 12"><path d="M4.5 1.5h6v6h-6z M1.5 4.5v6h6" fill="none" stroke="#444" stroke-width="1.2"/></svg>
<div class="t " style="left:740px;top:252px;font-size:13px;line-height:15px;color:#bcbcc6;">Детализация сервиса</div>
<div class="t " style="left:687px;top:286px;font-size:13px;line-height:15px;color:#4d4d4d;">Проект:</div>
<div class="fld" style="left:737px;top:281px;width:319px;height:23px;border-color:#a8a8a8;"></div>
<div class="a" style="left:994px;top:282px;width:1px;height:23px;background:#ababab"></div>
<svg class="a" style="left:1001.5px;top:290.75px" width="6" height="3.5" viewBox="0 0 6 3.5"><path d="M0 0H6L3.0 3.5Z" fill="#444"/></svg>
<div class="a" style="left:1015px;top:282px;width:1px;height:23px;background:#ababab"></div>
<div class="a" style="left:1021px;top:297px;width:1.4px;height:1.4px;background:#555"></div>
<div class="a" style="left:1025px;top:297px;width:1.4px;height:1.4px;background:#555"></div>
<div class="a" style="left:1029px;top:297px;width:1.4px;height:1.4px;background:#555"></div>
<div class="a" style="left:1036px;top:282px;width:1px;height:23px;background:#ababab"></div>
<svg class="a" style="left:1041px;top:286px" width="12" height="12" viewBox="0 0 12 12"><path d="M4.5 1.5h6v6h-6z M1.5 4.5v6h6" fill="none" stroke="#444" stroke-width="1.2"/></svg>
<div class="t " style="left:740px;top:286px;font-size:13px;line-height:15px;color:#bcbcc6;">Проект, в рамках которого создано зад...</div>
<div class="t " style="left:687px;top:320px;font-size:13px;line-height:15px;color:#4d4d4d;">Клиент:</div>
<div class="fld" style="left:737px;top:315px;width:319px;height:23px;border-color:#a8a8a8;"></div>
<div class="a" style="left:994px;top:316px;width:1px;height:23px;background:#ababab"></div>
<div class="a" style="left:1000px;top:331px;width:1.4px;height:1.4px;background:#555"></div>
<div class="a" style="left:1004px;top:331px;width:1.4px;height:1.4px;background:#555"></div>
<div class="a" style="left:1008px;top:331px;width:1.4px;height:1.4px;background:#555"></div>
<div class="a" style="left:1015px;top:316px;width:1px;height:23px;background:#ababab"></div>
<svg class="a" style="left:1022.5px;top:322.5px" width="7" height="7" viewBox="0 0 7 7"><path d="M0.5 0.5L6.5 6.5M6.5 0.5L0.5 6.5" stroke="#555" stroke-width="1.2"/></svg>
<div class="a" style="left:1036px;top:316px;width:1px;height:23px;background:#ababab"></div>
<svg class="a" style="left:1041px;top:320px" width="12" height="12" viewBox="0 0 12 12"><path d="M4.5 1.5h6v6h-6z M1.5 4.5v6h6" fill="none" stroke="#444" stroke-width="1.2"/></svg>
<div class="t " style="left:740px;top:320px;font-size:13px;line-height:15px;color:#bcbcc6;">Кому оказываем услугу по SLA</div>
<div class="t " style="left:283px;top:355px;font-size:13px;line-height:15px;color:#4d4d4d;">Тема:</div>
<div class="fld" style="left:355px;top:350px;width:668px;height:23px;border-color:#a8a8a8;"></div>
<div class="a" style="left:1003px;top:351px;width:1px;height:23px;background:#ababab"></div>
<svg class="a" style="left:1008px;top:354px" width="12" height="12" viewBox="0 0 12 12"><path d="M4.5 1.5h6v6h-6z M1.5 4.5v6h6" fill="none" stroke="#444" stroke-width="1.2"/></svg>
<div class="a" style="left:357px;top:371px;width:645px;height:0;border-top:1px dotted #e00"></div>
<div class="t " style="left:358px;top:355px;font-size:13px;line-height:15px;color:#bcbcc6;">Тема задания</div>
<div class="btn" style="left:1035px;top:350px;width:21px;height:23px;"></div>
<svg class="a" style="left:1043.3px;top:361.0px" width="7" height="4" viewBox="0 0 7 4"><path d="M0 0H7L3.5 4Z" fill="#222"/></svg>
<div class="btn" style="left:283px;top:385px;width:100px;height:24px;"></div>
<svg class="a" style="left:291px;top:390px" width="14" height="15" viewBox="0 0 14 15"><path d="M1.5 11.5L9.5 3.5L12.5 6.5L4.5 14.5L1 14.8Z" fill="#4cae3c" stroke="#2a7a20" stroke-width="0.8"/><path d="M9.5 3.5L11 2L14 5L12.5 6.5Z" fill="#2a6a20"/><path d="M1.2 14.6L1.5 12L3.8 14.3Z" fill="#f4f4f4"/><path d="M1.5 1.5L12.5 14" stroke="#d2141e" stroke-width="1.8"/></svg>
<div class="t " style="left:313px;top:391px;font-size:13px;line-height:15px;color:#333;">Просмотр</div>
<div class="btn" style="left:405px;top:385px;width:58px;height:24px;"></div>
<div class="a" style="left:435px;top:386px;width:1px;height:24px;background:#cfcfcf"></div>
<svg class="a" style="left:413px;top:390px" width="15" height="16" viewBox="0 0 15 16"><rect x="1.5" y="2" width="10" height="13" rx="2" fill="#f2f2f2" stroke="#8a8a8a"/><rect x="4" y="0.5" width="5" height="3" rx="1" fill="#ddd" stroke="#888"/><rect x="5.5" y="8" width="9" height="7.5" fill="#fff" stroke="#999" stroke-width="0.8"/><path d="M6 15L9 11L12 13.5L14 12V15Z" fill="#4a9a2a"/><rect x="6" y="8.5" width="8" height="3" fill="#7ab8e8"/></svg>
<svg class="a" style="left:442px;top:391px" width="13" height="14" viewBox="0 0 13 14"><rect x="0.5" y="0.5" width="12" height="13" fill="#f4f8fc" stroke="#7a9ab8"/><path d="M3.5 3.5H9M3.5 6H8.5M3.5 8.5H9" stroke="#3a5ad8" stroke-width="1"/><path d="M3 11H7" stroke="#d22" stroke-width="1.1"/><path d="M6 3.5H8" stroke="#d22" stroke-width="1"/></svg>
<div class="btn" style="left:485px;top:385px;width:88px;height:24px;"></div>
<div class="a" style="left:515px;top:386px;width:1px;height:24px;background:#cfcfcf"></div>
<div class="a" style="left:545px;top:386px;width:1px;height:24px;background:#cfcfcf"></div>
<svg class="a" style="left:493px;top:392px" width="14" height="11" viewBox="0 0 14 11"><path d="M4.8 0H9.2L14 11H10.6L9.8 8.8H4.2L3.4 11H0ZM5.2 6.3H8.8L7 1.8Z" fill="#16456e"/></svg>
<svg class="a" style="left:523px;top:393px" width="12" height="10" viewBox="0 0 12 10"><path d="M4.1 0H7.9L12 10H9.1L8.4 8H3.6L2.9 10H0ZM4.5 5.7H7.5L6 1.6Z" fill="#16456e"/></svg>
<svg class="a" style="left:532px;top:390px" width="6" height="3.5" viewBox="0 0 6 3.5"><path d="M0 3.5L3 0L6 3.5Z" fill="#16456e"/></svg>
<svg class="a" style="left:556px;top:396px" width="7" height="6" viewBox="0 0 7 6"><path d="M2.4 0H4.6L7 6H5.4L5 4.8H2L1.6 6H0ZM2.6 3.5H4.4L3.5 1Z" fill="#16456e"/></svg>
<svg class="a" style="left:562px;top:390px" width="6" height="3.5" viewBox="0 0 6 3.5"><path d="M0 0H6L3 3.5Z" fill="#16456e"/></svg>
<div class="btn" style="left:595px;top:385px;width:88px;height:24px;"></div>
<div class="a" style="left:625px;top:386px;width:1px;height:24px;background:#cfcfcf"></div>
<div class="a" style="left:655px;top:386px;width:1px;height:24px;background:#cfcfcf"></div>
<div class="t " style="left:603px;top:391px;font-size:14.5px;line-height:16px;color:#111;font-weight:bold;">Ж</div>
<div class="t " style="left:635px;top:390px;font-size:14px;line-height:16px;color:#222;font-style:italic">К</div>
<div class="t " style="left:664px;top:390px;font-size:14px;line-height:16px;color:#222;">Ч</div>
<div class="a" style="left:664px;top:405px;width:10px;height:1px;background:#222"></div>
<div class="btn" style="left:737px;top:385px;width:59px;height:24px;"></div>
<div class="t " style="left:751px;top:391px;font-size:13px;line-height:15px;color:#333;">Еще</div>
<svg class="a" style="left:785.2px;top:397.9px" width="6" height="3.4" viewBox="0 0 6 3.4"><path d="M0 0H6L3.0 3.4Z" fill="#444"/></svg>
<div class="btn" style="left:808px;top:385px;width:28px;height:24px;"></div>
<svg class="a" style="left:816px;top:390px" width="15" height="16" viewBox="0 0 15 16"><path d="M10.5 4.5L5 11Q3.5 13 5 14Q6.5 15 8 13L13 7Q15 4 13 2Q11 0 8.5 2.5L3 9Q1 12 3 14.5" fill="none" stroke="#666" stroke-width="1.2"/></svg>
<div class="btn" style="left:847px;top:385px;width:28px;height:24px;"></div>
<svg class="a" style="left:856px;top:391px" width="12" height="12" viewBox="0 0 12 12"><path d="M4.5 1.5h6v6h-6z M1.5 4.5v6h6" fill="none" stroke="#333" stroke-width="1.2"/></svg>
<div class="a" style="left:883px;top:381px;width:28px;height:26px;border:4px solid #e0342c;border-radius:7px;background:#fff"></div>
<div class="a" style="left:887px;top:385px;width:27px;height:25px;border-radius:2px;background:linear-gradient(#fff 45%,#ececec)"></div>
<svg class="a" style="left:892px;top:390px" width="18" height="16" viewBox="0 0 18 16"><rect x="1" y="1" width="11" height="11" fill="none" stroke="#2a9df0" stroke-dasharray="1.5 1"/><path d="M1 12V8L4 5L8 9L10 7.5L12 9.5V12Z" fill="#2a9df0"/><circle cx="6" cy="4.5" r="1.3" fill="#2a9df0"/><path d="M14 5L9 11Q8 13 9.5 14Q11 15 12 13L16.5 7.5Q17.5 5.5 16 4.5Q14.5 3.5 13 5.5L9.5 10" fill="none" stroke="#666" stroke-width="1"/></svg>
<div class="btn" style="left:925px;top:385px;width:28px;height:24px;background:linear-gradient(#fff 45%,#eee);border-color:#cfcfcf;box-shadow:0 1px 1px rgba(0,0,0,0.12)"></div>
<svg class="a" style="left:932px;top:391px" width="15" height="15" viewBox="0 0 15 15"><circle cx="7.5" cy="7.5" r="7" fill="#b4a8a6"/><path d="M4.5 4.5L10.5 10.5M10.5 4.5L4.5 10.5" stroke="#ede6e4" stroke-width="1.3"/></svg>
<div class="a" style="left:283px;top:421px;width:513px;height:255px;border:1px solid #9c9c9c;background:#fff"></div>
<div class="a" style="left:808px;top:420px;width:248px;height:256px;border:1px solid #9c9c9c;background:#fff"></div>
<div class="a" style="left:809px;top:421px;width:248px;height:30px;background:#f2f2f2"></div>
<div class="a" style="left:809px;top:451px;width:248px;height:1px;background:#c8c8c8"></div>
<div class="a" style="left:832px;top:666px;width:202px;height:8px;background:#d4d4d4;border-radius:4px"></div>
<div class="a" style="left:832px;top:666px;width:159px;height:8px;background:#999;border-radius:4px"></div>
<svg class="a" style="left:817px;top:666px" width="6" height="8" viewBox="0 0 6 8"><path d="M5 0V8L0 4Z" fill="#c8c8c8"/></svg>
<svg class="a" style="left:1043px;top:666px" width="6" height="8" viewBox="0 0 6 8"><path d="M0 0V8L5 4Z" fill="#333"/></svg>
<div class="t " style="left:283px;top:692px;font-size:13px;line-height:15px;color:#4d4d4d;">Влияние:</div>
<div class="fld" style="left:355px;top:687px;width:190px;height:23px;border-color:#a8a8a8;"></div>
<div class="a" style="left:525px;top:688px;width:1px;height:23px;background:#ababab"></div>
<svg class="a" style="left:532.5px;top:696.75px" width="6" height="3.5" viewBox="0 0 6 3.5"><path d="M0 0H6L3.0 3.5Z" fill="#444"/></svg>
<div class="t " style="left:358px;top:692px;font-size:13px;line-height:15px;color:#333;">Среднее</div>
<div class="t " style="left:557px;top:692px;font-size:13px;line-height:15px;color:#4d4d4d;">Срочность:</div>
<div class="fld" style="left:629px;top:687px;width:189px;height:23px;border-color:#a8a8a8;"></div>
<div class="a" style="left:798px;top:688px;width:1px;height:23px;background:#ababab"></div>
<svg class="a" style="left:805.5px;top:696.75px" width="6" height="3.5" viewBox="0 0 6 3.5"><path d="M0 0H6L3.0 3.5Z" fill="#444"/></svg>
<div class="t " style="left:632px;top:692px;font-size:13px;line-height:15px;color:#333;">Средняя</div>
<div class="t " style="left:830px;top:692px;font-size:13px;line-height:15px;color:#4d4d4d;">Приоритет:</div>
<div class="t " style="left:900px;top:692px;font-size:13px;line-height:15px;color:#333;">Средний</div>
<div class="fld" style="left:283px;top:721px;width:773px;height:23px;border-color:#a8a8a8;"></div>
<div class="t " style="left:286px;top:726px;font-size:13px;line-height:15px;color:#bcbcc6;">Произвольный комментарий к заданию</div>
<svg class="a" style="left:274px;top:767px" width="11" height="13" viewBox="0 0 11 13"><circle cx="5.5" cy="3.5" r="3" fill="#e0a855" stroke="#555" stroke-width="0.6"/><path d="M0.5 12.5Q0.5 8 5.5 8Q10.5 8 10.5 12.5Z" fill="#2f86b8"/><path d="M5.5 8L5 11L5.5 12L6 11Z" fill="#fff"/></svg>
<div class="t lnk" style="left:304px;top:768px;font-size:13px;line-height:15px;color:#2d50b8;">Новый: &lt;не записан !&gt; Администратор</div>
<svg class="a" style="left:766px;top:770px" width="13" height="10" viewBox="0 0 13 10"><rect x="0.5" y="0.5" width="12" height="9" fill="#fff" stroke="#8a9aaa"/><path d="M3 3.5H10M3 5.5H10M3 7.5H10" stroke="#9aa4ae" stroke-width="1"/></svg>
<div class="t " style="left:793px;top:768px;font-size:13px;line-height:15px;color:#9a2a2a;">Новый</div>
<svg class="a" style="left:953px;top:767px" width="17" height="16" viewBox="0 0 17 16"><rect x="0.5" y="10" width="3.5" height="6" fill="#e5261e"/><rect x="4.5" y="7" width="3.5" height="9" fill="#f5b41a"/><rect x="8.5" y="3.5" width="3.5" height="12.5" fill="#3a9ee8"/><rect x="12.5" y="0.5" width="3.5" height="15.5" fill="#4caf3a"/></svg>
<div class="t lnk" style="left:974px;top:768px;font-size:13px;line-height:15px;color:#2d50b8;">Диаграмма Ганта</div>
<div class="a" style="left:272px;top:794px;width:1156px;height:35px;background:#fbe9d6"></div>
<div class="t " style="left:277px;top:804px;font-size:13px;line-height:15px;color:#4d4d4d;">Оценка:</div>
<div class="fld" style="left:330px;top:799px;width:1091px;height:23px;border-color:#a8a8a8;"></div>
<div class="a" style="left:1401px;top:800px;width:1px;height:23px;background:#ababab"></div>
<svg class="a" style="left:1408.5px;top:808.75px" width="6" height="3.5" viewBox="0 0 6 3.5"><path d="M0 0H6L3.0 3.5Z" fill="#444"/></svg>
<div class="t " style="left:333px;top:804px;font-size:13px;line-height:15px;color:#333;">Без оценки</div>
<div class="a" style="left:1088px;top:158px;width:340px;height:26px;background:#f3f8f5"></div>
<div class="t " style="left:1093px;top:164px;font-size:13px;line-height:15px;color:#333;font-weight:bold;letter-spacing:0px">Исполнитель:</div>
<div class="btn" style="left:1088px;top:201px;width:28px;height:24px;"></div>
<svg class="a" style="left:1095px;top:205px" width="16" height="18" viewBox="0 0 16 18"><g fill="none" stroke="#5a5a5a" stroke-width="2.3"><path d="M7 7H3.5A2.4 2.4 0 0 0 3.5 11.8H7"/><path d="M8 7H11.5A2.4 2.4 0 0 1 11.5 11.8H8"/></g><g fill="none" stroke="#f4f4f4" stroke-width="0.7"><path d="M7 7H3.5A2.4 2.4 0 0 0 3.5 11.8H7"/><path d="M8 7H11.5A2.4 2.4 0 0 1 11.5 11.8H8"/></g><path d="M3.5 1.5L5.5 3.5M7.5 0.5V3.8M11.5 1.5L9.5 3.5M3.5 16.5L5.5 14.5M7.5 17.5V14.2M11.5 16.5L9.5 14.5" stroke="#c41818" stroke-width="1.1"/></svg>
<svg class="a" style="left:1187px;top:203px" width="17" height="18" viewBox="0 0 17 18"><path d="M9.5 16.5V9Q9.8 6.8 12.5 6.8Q16 7 16 11.5Q16 16 12 16.5Z" fill="#4cb83a"/><path d="M10 8Q11 10 12.5 9" stroke="#d8f0c0" stroke-width="1.2" fill="none"/><circle cx="12.6" cy="4.3" r="2.9" fill="#f2c800"/><path d="M9.8 4.5Q9.8 1.2 12.6 1.3Q15.3 1.5 15.4 4" fill="none" stroke="#7a4a10" stroke-width="1"/><path d="M1 9.5L2.8 7.7L5.6 10.5L7.6 8.5L8.8 15.5L1.8 14.3L3.8 12.3Z" fill="#f0401a"/></svg>
<div class="t " style="left:1207px;top:206px;font-size:16px;line-height:17px;color:#333;letter-spacing:0.4px">Администратор</div>
<div class="btn" style="left:1398px;top:201px;width:28px;height:24px;"></div>
<div class="a" style="left:1408px;top:217px;width:1.4px;height:1.4px;background:#555"></div>
<div class="a" style="left:1412px;top:217px;width:1.4px;height:1.4px;background:#555"></div>
<div class="a" style="left:1416px;top:217px;width:1.4px;height:1.4px;background:#555"></div>
<div class="a" style="left:1088px;top:244px;width:340px;height:27px;background:#f3f8f5"></div>
<div class="t " style="left:1093px;top:250px;font-size:13px;line-height:15px;color:#111;font-weight:bold;letter-spacing:0px">Даты:</div>
<div class="a" style="left:1367px;top:250px;width:13px;height:13px;border:1px solid #8a8a8a;border-radius:2px;background:#fff"></div>
<div class="t " style="left:1389px;top:249px;font-size:14px;line-height:16px;color:#1a6fc4;">?</div>
<svg class="a" style="left:1407px;top:251px" width="16" height="14" viewBox="0 0 16 14"><path d="M1.5 0.5H14.5Q15.5 0.5 15.5 1.5V11.5L14 13L12.5 11.5H1.5Q0.5 11.5 0.5 10.5V1.5Q0.5 0.5 1.5 0.5Z" fill="#fbd94a" stroke="#e0a020"/><rect x="7" y="5" width="2" height="5" fill="#c07a10"/><rect x="7" y="2.5" width="2" height="1.6" fill="#c07a10"/></svg>
<div class="t " style="left:1089px;top:281px;font-size:13px;line-height:15px;color:#4d4d4d;">Отреагировать до:</div>
<div class="a" style="left:1088px;top:300px;width:180px;height:23px;border:1px solid #cfcfcf;border-radius:3px;background:#fff"></div>
<div class="a" style="left:1248px;top:301px;width:1px;height:23px;background:#d8d8d8"></div>
<svg class="a" style="left:1255.3px;top:310.05px" width="6" height="3.3" viewBox="0 0 6 3.3"><path d="M0 0H6L3.0 3.3Z" fill="#aaa"/></svg>
<div class="a" style="left:1101px;top:315px;width:1.4px;height:1.4px;background:#cdb9a5"></div>
<div class="a" style="left:1113px;top:315px;width:1.4px;height:1.4px;background:#cdb9a5"></div>
<div class="a" style="left:1145px;top:309px;width:1.4px;height:1.4px;background:#cdb9a5"></div>
<div class="a" style="left:1145px;top:315px;width:1.4px;height:1.4px;background:#cdb9a5"></div>
<div class="a" style="left:1157px;top:309px;width:1.4px;height:1.4px;background:#cdb9a5"></div>
<div class="a" style="left:1157px;top:315px;width:1.4px;height:1.4px;background:#cdb9a5"></div>
<div class="t " style="left:1089px;top:335px;font-size:13px;line-height:15px;color:#4d4d4d;">Выполнить до:</div>
<div class="a" style="left:1088px;top:354px;width:180px;height:23px;border:1px solid #cfcfcf;border-radius:3px;background:#fff"></div>
<div class="a" style="left:1248px;top:355px;width:1px;height:23px;background:#d8d8d8"></div>
<svg class="a" style="left:1255.3px;top:364.05px" width="6" height="3.3" viewBox="0 0 6 3.3"><path d="M0 0H6L3.0 3.3Z" fill="#aaa"/></svg>
<div class="a" style="left:1101px;top:369px;width:1.4px;height:1.4px;background:#cdb9a5"></div>
<div class="a" style="left:1113px;top:369px;width:1.4px;height:1.4px;background:#cdb9a5"></div>
<div class="a" style="left:1145px;top:363px;width:1.4px;height:1.4px;background:#cdb9a5"></div>
<div class="a" style="left:1145px;top:369px;width:1.4px;height:1.4px;background:#cdb9a5"></div>
<div class="a" style="left:1157px;top:363px;width:1.4px;height:1.4px;background:#cdb9a5"></div>
<div class="a" style="left:1157px;top:369px;width:1.4px;height:1.4px;background:#cdb9a5"></div>
<div class="a" style="left:1088px;top:388px;width:340px;height:26px;background:#f3f8f5"></div>
<div class="t " style="left:1093px;top:394px;font-size:13px;line-height:15px;color:#333;font-weight:bold;letter-spacing:0px">Текущий этап:</div>
<svg class="a" style="left:1218px;top:433px" width="16" height="12" viewBox="0 0 16 12"><rect x="0.5" y="0.5" width="15" height="11" rx="4" fill="#f57c3a"/><text x="8" y="8.3" font-size="5.2" font-weight="bold" fill="#fff" text-anchor="middle" font-family="Liberation Sans">NEW</text></svg>
<div class="t " style="left:1249px;top:431px;font-size:16px;line-height:17px;color:#8e1c1c;">Новый</div>
<div class="a" style="left:1088px;top:464px;width:340px;height:26px;background:#f3f8f5"></div>
<div class="t " style="left:1093px;top:470px;font-size:13px;line-height:15px;color:#333;font-weight:bold;letter-spacing:0.32px">Перевести задание на этап:</div>
<div class="fld" style="left:1088px;top:499px;width:131px;height:23px;border-color:#a8a8a8;"></div>
<div class="a" style="left:1178px;top:500px;width:1px;height:23px;background:#ababab"></div>
<div class="a" style="left:1199px;top:500px;width:1px;height:23px;background:#ababab"></div>
<svg class="a" style="left:1185.5px;top:508.8px" width="6" height="3.4" viewBox="0 0 6 3.4"><path d="M0 0H6L3.0 3.4Z" fill="#444"/></svg>
<svg class="a" style="left:1206.5px;top:507.6px" width="6" height="6" viewBox="0 0 6 6"><path d="M0.5 0.5L5.5 5.5M5.5 0.5L0.5 5.5" stroke="#555" stroke-width="1.2"/></svg>
<div class="t " style="left:1167px;top:504px;font-size:13px;line-height:15px;color:#333;">0</div>
<div class="t " style="left:1226px;top:504px;font-size:13px;line-height:15px;color:#4d4d4d;">% выполнения</div>
<div class="btn" style="left:1108px;top:533px;width:298px;height:38px;"></div>
<svg class="a" style="left:1115px;top:544px" width="17" height="17" viewBox="0 0 17 17"><circle cx="8.5" cy="8.5" r="7.3" fill="#fff" stroke="#4aaaf0" stroke-width="1.4"/><circle cx="8.5" cy="8.5" r="4.8" fill="#ff6a00"/><path d="M1 5.5L5 8.5L1 11.5Z" fill="#ff6a00"/></svg>
<div class="t " style="left:1229px;top:546px;font-size:13px;line-height:15px;color:#0a10f0;">Регистрация</div>
<div class="a" style="left:1088px;top:601px;width:340px;height:30px;background:#f3f8f5"></div>
<div class="t " style="left:1093px;top:606px;font-size:13px;line-height:15px;color:#333;font-weight:bold;letter-spacing:0.3px">Трудозатраты:</div>
<svg class="a" style="left:1319px;top:607px" width="18" height="17" viewBox="0 0 18 17"><circle cx="3" cy="2.5" r="2" fill="#ddd" stroke="#888" stroke-width="0.8"/><circle cx="8.5" cy="9.5" r="6.3" fill="#fff" stroke="#888" stroke-width="2"/><path d="M8.5 9.5L5 6.5M8.5 9.5L12 7" stroke="#d32" stroke-width="1"/><path d="M8.5 9.5L11 6" stroke="#222" stroke-width="1"/><path d="M13 9L17.5 12L13 15.5Z" fill="#3a8ee0"/></svg>
<svg class="a" style="left:1359px;top:607px" width="18" height="17" viewBox="0 0 18 17"><circle cx="3" cy="2.5" r="2" fill="#c8c8c8"/><circle cx="8.5" cy="9.5" r="6.3" fill="#d8d8d8" stroke="#bbb" stroke-width="2"/><rect x="10.5" y="10" width="6.5" height="6.5" fill="#c0c4cc" stroke="#a8acb4"/></svg>
<svg class="a" style="left:1400px;top:608px" width="15" height="15" viewBox="0 0 15 15"><path d="M4 14L1 14.5L1.5 11.5L11 2L13.5 4.5Z" fill="#4cb050" stroke="#2a6a2a" stroke-width="0.8"/><path d="M11 2L12.5 0.5L15 3L13.5 4.5Z" fill="#4a5a6a"/><path d="M1 14.5L1.5 11.5L4 14Z" fill="#f0b040"/></svg>
<div class="a" style="left:1088px;top:640px;width:340px;height:26px;background:#f3f8f5"></div>
<div class="t " style="left:1093px;top:646px;font-size:13px;line-height:15px;color:#333;font-weight:bold;letter-spacing:0px">Теги:</div>
<div class="fld" style="left:1088px;top:675px;width:338px;height:23px;border-color:#a8a8a8;"></div>
<div class="a" style="left:1406px;top:676px;width:1px;height:23px;background:#ababab"></div>
<svg class="a" style="left:1413.5px;top:684.75px" width="6" height="3.5" viewBox="0 0 6 3.5"><path d="M0 0H6L3.0 3.5Z" fill="#444"/></svg>
<div class="t " style="left:1091px;top:680px;font-size:13px;line-height:15px;color:#bcbcc6;">Выберите или введите тег</div>
</body></html>
